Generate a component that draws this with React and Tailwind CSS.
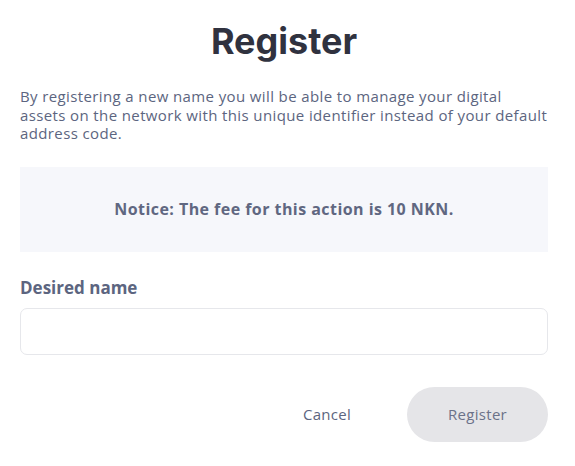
export default function App() {
  return (
    <div className="w-[575px] h-[466px] bg-white pl-5 pr-[27px] pt-[17px]" style={{ fontFamily: '"Open Sans", sans-serif' }}>
      <h1 className="text-center text-[36px] leading-[48px] font-bold text-[#30323f]" style={{ fontFamily: 'Inter, sans-serif' }}>Register</h1>
      <p className="mt-[22px] w-[545px] text-[15px] leading-[18.5px] tracking-[0.38px] text-[#5c6580]">
        By registering a new name you will be able to manage your digital<br />
        assets on the network with this unique identifier instead of your default<br />
        address code.
      </p>
      <div className="mt-[24px] h-[85px] bg-[#f6f7fb] flex items-center justify-center">
        <span className="text-[16px] font-bold tracking-[0.45px] text-[#606781]">Notice: The fee for this action is 10 NKN.</span>
      </div>
      <label className="block mt-[26px] text-[17px] font-bold text-[#5c6580] leading-[20px]">Desired name</label>
      <input className="mt-[10px] w-full h-[47px] border border-[#e6e7eb] rounded-[7px] outline-none" />
      <div className="mt-[32px] flex items-center justify-end">
        <button className="w-[120px] h-[55px] text-[15px] tracking-[0.3px] text-[#5c6580]">Cancel</button>
        <button className="ml-[20px] w-[141px] h-[55px] rounded-full bg-[#e5e5e8] text-[15px] tracking-[0.3px] text-[#6b7289]">Register</button>
      </div>
    </div>
  );
}
